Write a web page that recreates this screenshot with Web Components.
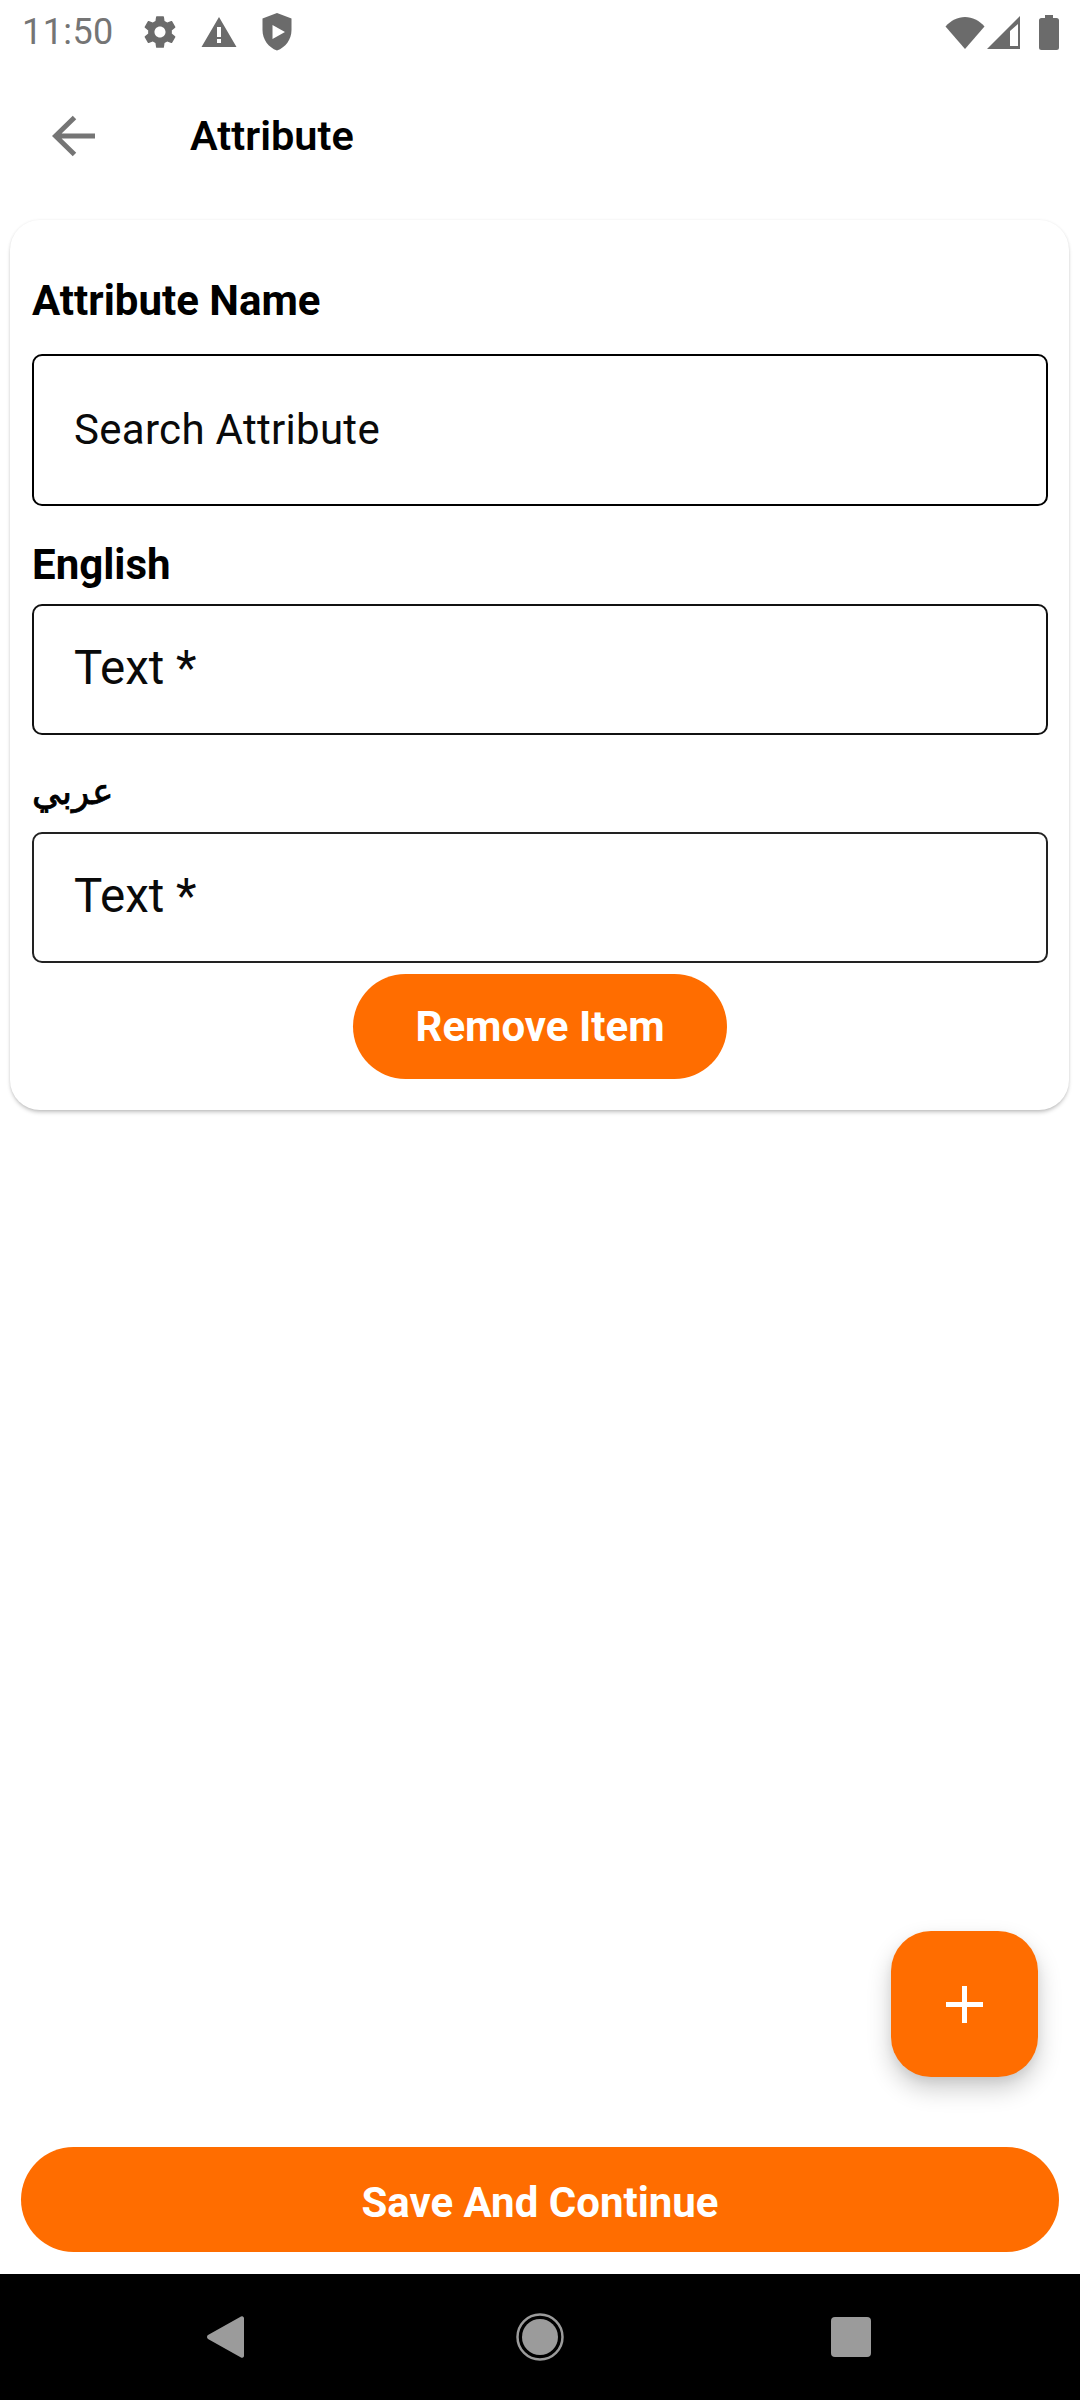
<!DOCTYPE html>
<html lang="en"><head><meta charset="utf-8"><title>Attribute</title>
<style>
html,body{margin:0;padding:0;background:#fff}
body{width:1080px;height:2400px;font-family:Roboto,"Noto Sans",sans-serif;color:#000;overflow:hidden}
</style></head><body>
<x-screen>
  <x-status-bar slot="top"></x-status-bar>
  <x-app-bar slot="top">Attribute</x-app-bar>
  <x-card slot="main">
    <x-field label="Attribute Name" placeholder="Search Attribute" kind="search"></x-field>
    <x-field label="English" placeholder="Text *" kind="text"></x-field>
    <x-field label="عربي" placeholder="Text *" kind="arabic"></x-field>
    <x-pill kind="small">Remove Item</x-pill>
  </x-card>
  <x-fab slot="overlay"></x-fab>
  <x-pill slot="bottom" kind="wide">Save And Continue</x-pill>
  <x-nav-bar slot="nav"></x-nav-bar>
</x-screen>
<script>
function def(name,html){
  customElements.define(name,class extends HTMLElement{
    constructor(){super();this.attachShadow({mode:'open'}).innerHTML=html;}
  });
}
def('x-screen',`<style>
:host{display:flex;flex-direction:column;width:1080px;height:2400px;position:relative;background:#fff}
.main{flex:1;padding:0 11px 0 10px;min-height:0}
.bottom{padding:0 21px 22px}
</style>
<slot name="top"></slot><div class="main"><slot name="main"></slot></div>
<slot name="overlay"></slot><div class="bottom"><slot name="bottom"></slot></div><slot name="nav"></slot>`);
def('x-status-bar',`<style>
:host{display:flex;align-items:center;height:64px;box-sizing:border-box;padding:0 21px 0 22px}
.t{font:400 36px/1 Roboto,sans-serif;letter-spacing:.4px;margin-right:27px;color:#757575}
svg{display:block;fill:#6b6b6b}
.r{margin-left:auto;display:flex;align-items:center}
</style>
<span class="t">11:50</span>
<svg width="38" height="38" viewBox="0 0 24 24" style="margin-right:22px"><path d="M19.43 12.98c.04-.32.07-.64.07-.98s-.03-.66-.07-.98l2.11-1.65c.19-.15.24-.42.12-.64l-2-3.46c-.12-.22-.39-.3-.61-.22l-2.49 1c-.52-.4-1.08-.73-1.69-.98l-.38-2.65C14.46 2.18 14.25 2 14 2h-4c-.25 0-.46.18-.49.42l-.38 2.65c-.61.25-1.17.59-1.69.98l-2.49-1c-.23-.09-.49 0-.61.22l-2 3.46c-.13.22-.07.49.12.64l2.11 1.65c-.04.32-.07.65-.07.98s.03.66.07.98l-2.11 1.65c-.19.15-.24.42-.12.64l2 3.46c.12.22.39.3.61.22l2.49-1c.52.4 1.08.73 1.69.98l.38 2.65c.03.24.24.42.49.42h4c.25 0 .46-.18.49-.42l.38-2.65c.61-.25 1.17-.59 1.69-.98l2.49 1c.23.09.49 0 .61-.22l2-3.46c.12-.22.07-.49-.12-.64l-2.11-1.65zM12 15.5c-1.93 0-3.5-1.57-3.5-3.5s1.57-3.5 3.5-3.5 3.5 1.57 3.5 3.5-1.57 3.5-3.5 3.5z"/></svg>
<svg width="36" height="32" viewBox="0 0 36 32" style="margin-right:25px"><path fill-rule="evenodd" d="M18 1 35.500 31H.500zM16 11v10h4V11zM16 23v4h4v-4z"/></svg>
<svg width="30" height="38" viewBox="0 0 30 38"><path fill-rule="evenodd" d="M15 0 29.500 5.500V17c0 9.500-6 17.500-14.500 20.500C6.500 34.500.5 26.500.5 17V5.500zM10.500 12v14L23 19z"/></svg>
<div class="r">
<svg width="40" height="33" viewBox="0 0 40 33" style="margin-right:2px"><path d="M20 33 .5 10.500C6 4.500 12.500 1 20 1s14 3.500 19.500 9.500z"/></svg>
<svg width="34" height="33" viewBox="0 0 34 33" style="margin-right:18px"><path fill-rule="evenodd" d="M33 0v33H0zM31 8 23 15v15h8z"/></svg>
<svg width="20" height="35" viewBox="0 0 20 35"><path d="M6 0h8v3h3.500A2.500 2.500 0 0 1 20 5.500V32.500A2.500 2.500 0 0 1 17.500 35H2.500A2.500 2.500 0 0 1 0 32.500V5.500A2.500 2.500 0 0 1 2.500 3H6z"/></svg>
</div>`);
def('x-app-bar',`<style>
:host{display:flex;align-items:center;height:156px;box-sizing:border-box;padding:0 0 13px 52px}
svg{display:block;margin-right:94px}
.t{font:600 41.5px/1 Roboto,sans-serif;padding-top:1px}
</style>
<svg width="44" height="42" viewBox="0 0 44 42"><path d="M43 21H4M22.500 2.500 3.500 21 22.500 39.500" fill="none" stroke="#757575" stroke-width="5"/></svg>
<span class="t"><slot></slot></span>`);
def('x-card',`<style>
:host{display:flex;flex-direction:column;box-sizing:border-box;height:890px;padding:56px 21px 0 22px;border-radius:30px;background:#fff;
box-shadow:0 3px 4px -1px rgba(0,0,0,.25),0 0 3px rgba(0,0,0,.07)}
</style><slot></slot>`);
customElements.define('x-field',class extends HTMLElement{
  constructor(){super();
    const k=this.getAttribute('kind');
    const c={search:{h:152,fs:42,ls:.3,pb:0,mt:0,mb:28,col:'#000'},text:{h:131,fs:47.5,ls:0,pb:1,mt:34,mb:14,col:'#111'},arabic:{h:131,fs:47.5,ls:0,pb:1,mt:32,mb:15,col:'#222'}}[k];
    const ar=k==='arabic';
    this.attachShadow({mode:'open'}).innerHTML=`<style>
:host{display:block;margin-top:${c.mt}px}
.l{font:700 42px/50px Roboto,"Noto Sans",sans-serif;height:50px;margin-bottom:${c.mb}px}
.a{font:400 36px/50px "DejaVu Sans",sans-serif;width:max-content;-webkit-text-stroke:.8px #000}
.b{display:flex;align-items:center;box-sizing:border-box;height:${c.h}px;border:2px solid ${c.col};border-radius:10px;padding:0 40px ${c.pb}px;
font:400 ${c.fs}px/1 Roboto,sans-serif;letter-spacing:${c.ls}px;color:#0a0a0a}
</style><div class="l${ar?' a':''}"${ar?' dir="rtl" lang="ar"':''}>${this.getAttribute('label')}</div>
<div class="b">${this.getAttribute('placeholder')}</div>`;
  }
});
def('x-pill',`<style>
:host{display:flex;align-items:center;justify-content:center;box-sizing:border-box;height:105px;border-radius:53px;background:#ff6d00;color:#fff;font:700 42px/1 Roboto,sans-serif}
:host([kind=small]){width:374px;align-self:center;margin-top:11px}
:host([kind=wide]){padding-top:6px}
</style><slot></slot>`);
def('x-fab',`<style>
:host{position:absolute;left:891px;top:1931px;width:147px;height:146px;border-radius:40px;background:#ff6d00;display:flex;align-items:center;justify-content:center;
box-shadow:0 12px 24px rgba(0,0,0,.2),0 4px 10px rgba(0,0,0,.06)}
</style><svg width="37" height="37" viewBox="0 0 37 37"><path d="M18.500 0v37M0 18.500h37" stroke="#fff" stroke-width="5"/></svg>`);
def('x-nav-bar',`<style>
:host{display:flex;align-items:center;box-sizing:border-box;height:126px;background:#000;padding:0 0 0 207px}
svg{display:block;fill:#9b9b9b}
</style>
<svg width="37" height="44" viewBox="0 0 37 44" style="margin-right:272px"><path d="M34 1.500A2 2 0 0 1 37 3V41A2 2 0 0 1 34 42.500L1 24A2.500 2.500 0 0 1 1 20z"/></svg>
<svg width="48" height="48" viewBox="0 0 48 48" style="margin-right:267px"><circle cx="24" cy="24" r="22.500" fill="none" stroke="#9b9b9b" stroke-width="2.500"/><circle cx="24" cy="24" r="18"/></svg>
<svg width="40" height="40" viewBox="0 0 40 40"><rect width="40" height="40" rx="4"/></svg>`);
</script>
</body></html>
